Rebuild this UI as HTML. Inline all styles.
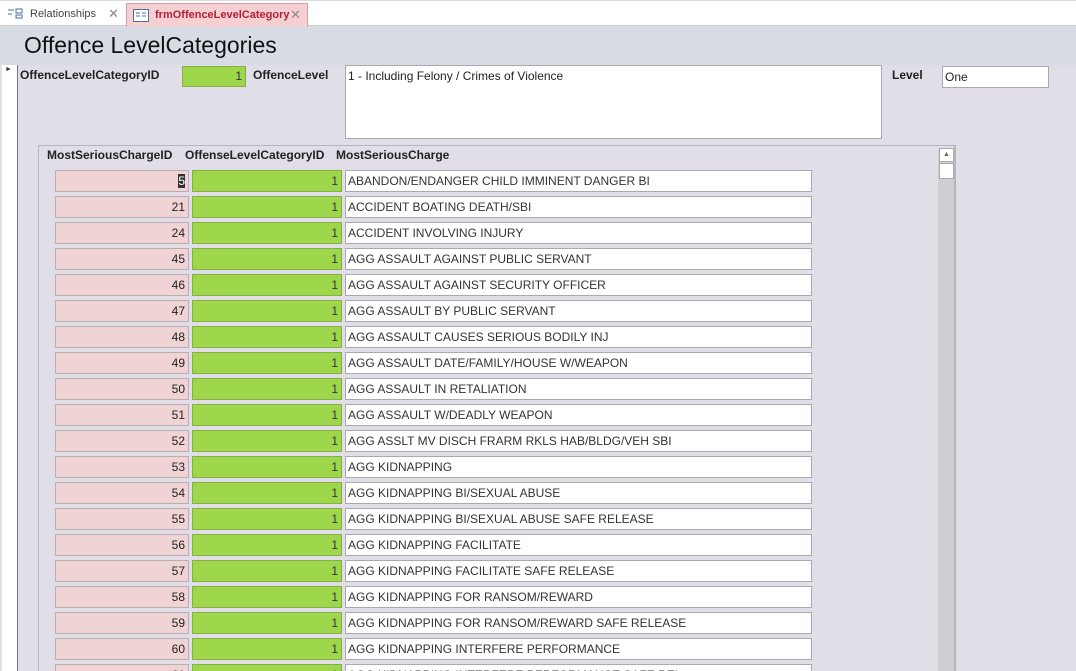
<!DOCTYPE html>
<html style="overflow:hidden;width:1076px;height:671px"><head><style>
*{margin:0;padding:0;box-sizing:border-box}
body{width:1076px;height:671px;overflow:hidden;background:#e1dee8;font-family:"Liberation Sans",sans-serif;font-size:12px;color:#222;position:relative}
.a{position:absolute}
.tabs{left:0;top:0;width:1076px;height:26px;background:#fff;border-bottom:1px solid #c8c8c8;border-top:1px solid #ddd}
.tab1{left:4px;top:3px;width:120px;height:23px;font-size:11px;color:#444;padding:5px 0 0 26px}
.tab2{left:126px;top:3px;width:182px;height:24px;background:#f6cfd3;border:1px solid #d9a0a8;border-bottom:none;font-size:11px;color:#b0203a;padding:5px 0 0 28px;font-weight:bold}
.x{color:#888;font-size:13px;position:absolute;top:3px;font-weight:normal}
.hdr{left:0;top:27px;width:1076px;height:38px;background:#d6dbe4}
.title{left:24px;top:32px;font-size:23px;color:#111}
.sel{left:2px;top:65px;width:16px;height:606px;background:#fff;border-right:1px solid #777}
.lbl{font-size:12px;color:#222;font-weight:bold}
.box{background:#fff;border:1px solid #a9a9b4}
.sub{left:38px;top:145px;width:918px;height:526px;border:1px solid #b5b5be;border-right:2px solid #b5b5be;border-bottom:none}
.pk{background:#f0d3d4;border:1px solid #b9aeb0;text-align:right;padding:3px 3px 0 0}
.gr{background:#9fd74c;border:1px solid #86b142;text-align:right;padding:3px 3px 0 0;color:#333}
.wt{background:#fff;border:1px solid #a9a9b4;padding:3px 0 0 2px;font-size:12px;color:#333}
.sb{left:938px;top:148px;width:16px;height:523px;background:#cfcfd3}
</style></head><body>
<div class="a tabs"></div>
<div class="a tab1">Relationships<span class="x" style="left:104px">✕</span>
<svg class="a" style="left:3px;top:4px" width="16" height="13"><path d="M1 3h6M1 7h4M9 2h6v4H9zM9 8h6v3H9z" stroke="#4a6fa5" fill="none"/></svg></div>
<div class="a tab2">frmOffenceLevelCategory<span class="x" style="left:163px">✕</span>
<svg class="a" style="left:6px;top:5px" width="16" height="13"><rect x="0.5" y="0.5" width="15" height="12" fill="#fff" stroke="#4a6fa5"/><path d="M3 4h4M3 7h4M9 4h4M9 7h4" stroke="#4a6fa5"/></svg></div>
<div class="a hdr"></div>
<div class="a title">Offence LevelCategories</div>
<div class="a sel"></div>
<div class="a" style="left:5px;top:66px;font-size:7px;color:#333">►</div>
<div class="a lbl" style="left:20px;top:68px">OffenceLevelCategoryID</div>
<div class="a gr" style="left:182px;top:66px;width:64px;height:21px;padding-top:2px">1</div>
<div class="a lbl" style="left:253px;top:68px">OffenceLevel</div>
<div class="a box" style="left:345px;top:65px;width:537px;height:74px;padding:3px 0 0 2px">1 - Including Felony / Crimes of Violence</div>
<div class="a lbl" style="left:892px;top:68px">Level</div>
<div class="a box" style="left:942px;top:66px;width:107px;height:22px;padding:3px 0 0 2px">One</div>
<div class="a sub"></div>
<div class="a lbl" style="left:47px;top:148px">MostSeriousChargeID</div>
<div class="a lbl" style="left:185px;top:148px">OffenseLevelCategoryID</div>
<div class="a lbl" style="left:336px;top:148px">MostSeriousCharge</div>
<div class="a sb"></div>
<div class="a" style="left:939px;top:148px;width:15px;height:14px;background:#fff;border:1px solid #aaa;font-size:7px;text-align:center;color:#666;line-height:12px">▲</div>
<div class="a" style="left:939px;top:163px;width:15px;height:16px;background:#fff;border:1px solid #aaa"></div>
<div id="rows"></div>
<script>
var d=[["5","ABANDON/ENDANGER CHILD IMMINENT DANGER BI"],["21","ACCIDENT BOATING DEATH/SBI"],["24","ACCIDENT INVOLVING INJURY"],["45","AGG ASSAULT AGAINST PUBLIC SERVANT"],["46","AGG ASSAULT AGAINST SECURITY OFFICER"],["47","AGG ASSAULT BY PUBLIC SERVANT"],["48","AGG ASSAULT CAUSES SERIOUS BODILY INJ"],["49","AGG ASSAULT DATE/FAMILY/HOUSE W/WEAPON"],["50","AGG ASSAULT IN RETALIATION"],["51","AGG ASSAULT W/DEADLY WEAPON"],["52","AGG ASSLT MV DISCH FRARM RKLS HAB/BLDG/VEH SBI"],["53","AGG KIDNAPPING"],["54","AGG KIDNAPPING BI/SEXUAL ABUSE"],["55","AGG KIDNAPPING BI/SEXUAL ABUSE SAFE RELEASE"],["56","AGG KIDNAPPING FACILITATE"],["57","AGG KIDNAPPING FACILITATE SAFE RELEASE"],["58","AGG KIDNAPPING FOR RANSOM/REWARD"],["59","AGG KIDNAPPING FOR RANSOM/REWARD SAFE RELEASE"],["60","AGG KIDNAPPING INTERFERE PERFORMANCE"],["61","AGG KIDNAPPING INTERFERE PERFORMANCE SAFE REL"]];
var h="";d.forEach(function(r,i){var y=170+i*26;
h+='<div class="a pk" style="left:55px;top:'+y+'px;width:134px;height:22px">'+(i==0?'<span style="background:#333;color:#fff">5</span>':r[0])+'</div>';
h+='<div class="a gr" style="left:192px;top:'+y+'px;width:150px;height:22px">1</div>';
h+='<div class="a wt" style="left:345px;top:'+y+'px;width:467px;height:22px">'+r[1]+'</div>';});
document.getElementById("rows").innerHTML=h;
</script>
</body></html>
